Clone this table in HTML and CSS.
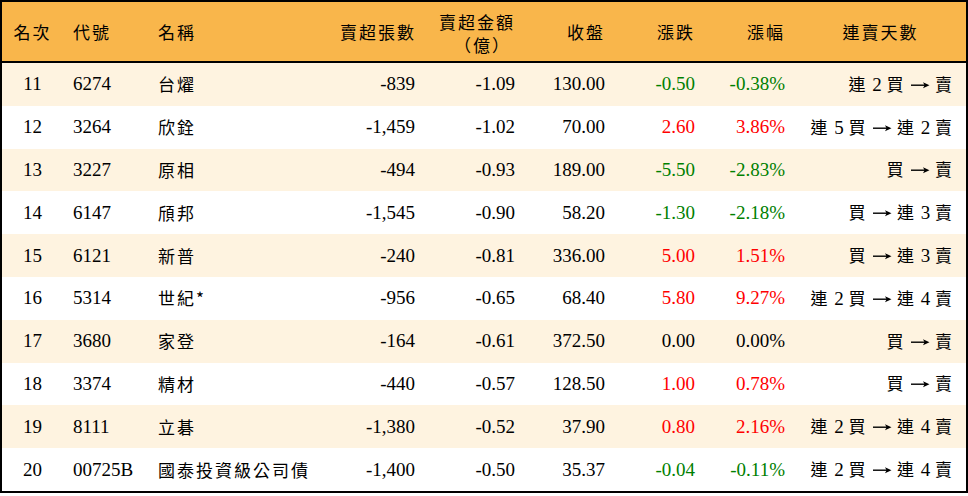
FILE: index.html
```html
<!DOCTYPE html>
<html lang="zh-Hant">
<head>
<meta charset="utf-8">
<title>賣超排行</title>
<link rel="stylesheet" href="styles.css">
</head>
<body>
<svg class="defs" width="0" height="0" aria-hidden="true">
  <symbol id="arrow" viewBox="0 0 20 10">
    <path d="M1 5.2H15.5" stroke="#000" stroke-width="1.4" fill="none"/>
    <path d="M13 2.2L19.5 5.2L13 8.2L14.6 5.2Z" fill="#000"/>
  </symbol>
</svg>
<div class="board">
  <div class="row head">
    <div class="c center zh">名次</div>
    <div class="c zh">代號</div>
    <div class="c zh">名稱</div>
    <div class="c right zh">賣超張數</div>
    <div class="c right zh two"><span>賣超金額</span><span>（億）</span></div>
    <div class="c right zh">收盤</div>
    <div class="c right zh">漲跌</div>
    <div class="c right zh">漲幅</div>
    <div class="c center zh">連賣天數</div>
  </div>

  <div class="row alt">
    <div class="c center">11</div><div class="c">6274</div><div class="c zh">台燿</div>
    <div class="c right">-839</div><div class="c right">-1.09</div><div class="c right">130.00</div>
    <div class="c right down">-0.50</div><div class="c right down">-0.38%</div>
    <div class="c right last"><span class="zh">連</span> 2 <span class="zh">買</span> <svg class="arr" aria-label="→"><use href="#arrow"/></svg> <span class="zh">賣</span></div>
  </div>
  <div class="row">
    <div class="c center">12</div><div class="c">3264</div><div class="c zh">欣銓</div>
    <div class="c right">-1,459</div><div class="c right">-1.02</div><div class="c right">70.00</div>
    <div class="c right up">2.60</div><div class="c right up">3.86%</div>
    <div class="c right last"><span class="zh">連</span> 5 <span class="zh">買</span> <svg class="arr" aria-label="→"><use href="#arrow"/></svg> <span class="zh">連</span> 2 <span class="zh">賣</span></div>
  </div>
  <div class="row alt">
    <div class="c center">13</div><div class="c">3227</div><div class="c zh">原相</div>
    <div class="c right">-494</div><div class="c right">-0.93</div><div class="c right">189.00</div>
    <div class="c right down">-5.50</div><div class="c right down">-2.83%</div>
    <div class="c right last"><span class="zh">買</span> <svg class="arr" aria-label="→"><use href="#arrow"/></svg> <span class="zh">賣</span></div>
  </div>
  <div class="row">
    <div class="c center">14</div><div class="c">6147</div><div class="c zh">頎邦</div>
    <div class="c right">-1,545</div><div class="c right">-0.90</div><div class="c right">58.20</div>
    <div class="c right down">-1.30</div><div class="c right down">-2.18%</div>
    <div class="c right last"><span class="zh">買</span> <svg class="arr" aria-label="→"><use href="#arrow"/></svg> <span class="zh">連</span> 3 <span class="zh">賣</span></div>
  </div>
  <div class="row alt">
    <div class="c center">15</div><div class="c">6121</div><div class="c zh">新普</div>
    <div class="c right">-240</div><div class="c right">-0.81</div><div class="c right">336.00</div>
    <div class="c right up">5.00</div><div class="c right up">1.51%</div>
    <div class="c right last"><span class="zh">買</span> <svg class="arr" aria-label="→"><use href="#arrow"/></svg> <span class="zh">連</span> 3 <span class="zh">賣</span></div>
  </div>
  <div class="row">
    <div class="c center">16</div><div class="c">5314</div><div class="c zh">世紀*</div>
    <div class="c right">-956</div><div class="c right">-0.65</div><div class="c right">68.40</div>
    <div class="c right up">5.80</div><div class="c right up">9.27%</div>
    <div class="c right last"><span class="zh">連</span> 2 <span class="zh">買</span> <svg class="arr" aria-label="→"><use href="#arrow"/></svg> <span class="zh">連</span> 4 <span class="zh">賣</span></div>
  </div>
  <div class="row alt">
    <div class="c center">17</div><div class="c">3680</div><div class="c zh">家登</div>
    <div class="c right">-164</div><div class="c right">-0.61</div><div class="c right">372.50</div>
    <div class="c right">0.00</div><div class="c right">0.00%</div>
    <div class="c right last"><span class="zh">買</span> <svg class="arr" aria-label="→"><use href="#arrow"/></svg> <span class="zh">賣</span></div>
  </div>
  <div class="row">
    <div class="c center">18</div><div class="c">3374</div><div class="c zh">精材</div>
    <div class="c right">-440</div><div class="c right">-0.57</div><div class="c right">128.50</div>
    <div class="c right up">1.00</div><div class="c right up">0.78%</div>
    <div class="c right last"><span class="zh">買</span> <svg class="arr" aria-label="→"><use href="#arrow"/></svg> <span class="zh">賣</span></div>
  </div>
  <div class="row alt">
    <div class="c center">19</div><div class="c">8111</div><div class="c zh">立碁</div>
    <div class="c right">-1,380</div><div class="c right">-0.52</div><div class="c right">37.90</div>
    <div class="c right up">0.80</div><div class="c right up">2.16%</div>
    <div class="c right last"><span class="zh">連</span> 2 <span class="zh">買</span> <svg class="arr" aria-label="→"><use href="#arrow"/></svg> <span class="zh">連</span> 4 <span class="zh">賣</span></div>
  </div>
  <div class="row">
    <div class="c center">20</div><div class="c">00725B</div><div class="c zh">國泰投資級公司債</div>
    <div class="c right">-1,400</div><div class="c right">-0.50</div><div class="c right">35.37</div>
    <div class="c right down">-0.04</div><div class="c right down">-0.11%</div>
    <div class="c right last"><span class="zh">連</span> 2 <span class="zh">買</span> <svg class="arr" aria-label="→"><use href="#arrow"/></svg> <span class="zh">連</span> 4 <span class="zh">賣</span></div>
  </div>
</div>
</body>
</html>
```

FILE: styles.css
```css
html, body {
  margin: 0;
  padding: 0;
  background: #ffffff;
}

body {
  font-family: "Liberation Serif", "Noto Sans CJK TC", serif;
  font-size: 19px;
  color: #000000;
}

.defs {
  position: absolute;
  width: 0;
  height: 0;
  overflow: hidden;
}

.board {
  width: 964px;
  border: 2px solid #000000;
}

.row {
  display: grid;
  grid-template-columns: 61px 85px 182px 95px 100px 90px 90px 90px 171px;
  height: 42.8px;
  align-items: center;
  background: #ffffff;
}

.row.alt {
  background: #fef3e0;
}

.row.head {
  height: 59px;
  background: #f9b64b;
  border-bottom: 2px solid #000000;
}

.c {
  padding: 0 10px;
  white-space: nowrap;
  line-height: 22px;
}

.center {
  text-align: center;
  padding: 0;
}

.right {
  text-align: right;
}

.last {
  padding-right: 12px;
}

.zh {
  font-family: "Noto Sans CJK TC", sans-serif;
  font-size: 17px;
  letter-spacing: 2px;
}

.arr {
  width: 20px;
  height: 10px;
  vertical-align: 1px;
}

.two {
  display: flex;
  flex-direction: column;
  align-items: flex-end;
  line-height: 23px;
  padding-top: 3px;
}

.two span:last-child {
  margin-right: 4px;
}

.up {
  color: #ff0000;
}

.down {
  color: #008000;
}
```
